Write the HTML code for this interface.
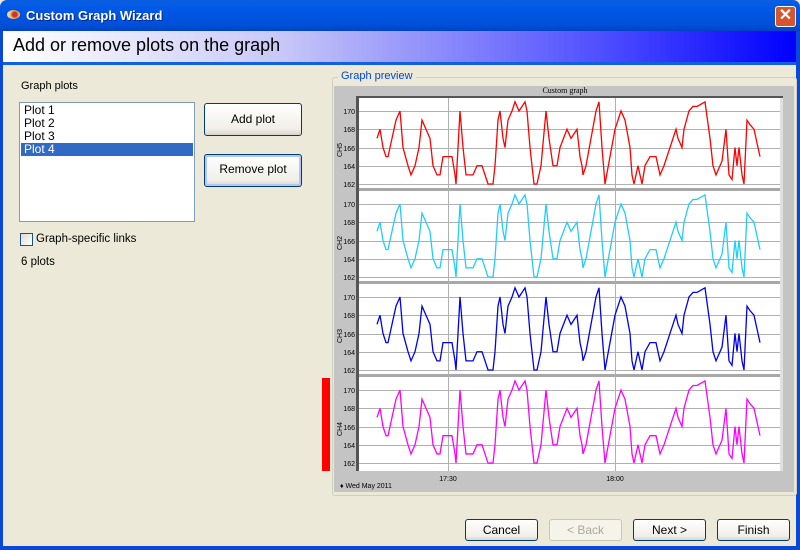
<!DOCTYPE html>
<html><head><meta charset="utf-8"><style>
*{margin:0;padding:0;box-sizing:border-box}
body{width:800px;height:550px;overflow:hidden;background:#ECE9D8;font-family:"Liberation Sans",sans-serif;font-size:11px;color:#000;position:relative}
.abs{position:absolute}
.btn{position:absolute;border:1px solid #003C74;border-radius:3px;background:linear-gradient(#fff,#F0EFE8 80%,#D8D6CC);text-align:center;font-size:12px;}
</style></head><body>
<div class="abs" style="left:0;top:0;width:800px;height:31px;background:linear-gradient(#0A5FE0,#0058E6 30%,#0050D8 80%,#0042C4);border-radius:7px 7px 0 0"></div>
<div class="abs" style="left:7px;top:10px;width:13px;height:9px;border-radius:50%;background:radial-gradient(circle at 60% 50%,#c33 25%,#f6b040 45%,#ddd 70%)"></div>
<div class="abs" style="left:26px;top:8px;color:#fff;font-weight:bold;font-size:13px;text-shadow:1px 1px #0a2a8a">Custom Graph Wizard</div>
<div class="abs" style="left:775px;top:6px;width:21px;height:21px;border:1px solid #fff;border-radius:3px;background:#D7542F;color:#fff;font-weight:bold;font-size:16px;line-height:18px;text-align:center">✕</div>
<div class="abs" style="left:0;top:31px;width:3px;height:519px;background:#0A48D8"></div>
<div class="abs" style="left:796px;top:31px;width:4px;height:519px;background:#0A48D8"></div>
<div class="abs" style="left:0;top:546px;width:800px;height:4px;background:#0A48D8"></div>
<div class="abs" style="left:3px;top:31px;width:793px;height:31px;background:linear-gradient(90deg,#fff 0%,#C8C8F8 35%,#5050FF 75%,#0000FF 100%)"></div>
<div class="abs" style="left:3px;top:62px;width:793px;height:3px;background:#1060E0"></div>
<div class="abs" style="left:13px;top:35px;font-size:18px">Add or remove plots on the graph</div>
<div class="abs" style="left:21px;top:80px;font-size:11px">Graph plots</div>
<div class="abs" style="left:19px;top:102px;width:176px;height:120px;background:#fff;border:1px solid #7F9DB9;font-size:12px;line-height:13px;padding:1px 1px">
<div style="padding-left:3px">Plot 1</div><div style="padding-left:3px">Plot 2</div><div style="padding-left:3px">Plot 3</div><div style="padding-left:3px;background:#316AC5;color:#fff">Plot 4</div></div>
<div class="btn" style="left:204px;top:103px;width:98px;height:33px;line-height:31px">Add plot</div>
<div class="btn" style="left:204px;top:154px;width:98px;height:33px;line-height:29px;box-shadow:inset 0 0 0 2px #B2C8F0">Remove plot</div>
<div class="abs" style="left:20px;top:233px;width:13px;height:13px;border:1px solid #1C5180;background:linear-gradient(135deg,#DCDBD5,#fff)"></div>
<div class="abs" style="left:36px;top:233px;font-size:11.5px">Graph-specific links</div>
<div class="abs" style="left:21px;top:256px;font-size:11.5px">6 plots</div>
<div class="abs" style="left:332px;top:77px;width:465px;height:419px;border:1px solid #D0D0BF;border-radius:3px"></div>
<div class="abs" style="left:338px;top:70px;padding:0 3px;background:#ECE9D8;color:#0046D5;font-size:11px">Graph preview</div>
<div class="abs" style="left:322px;top:378px;width:8px;height:93px;background:#f00"></div>
<svg class="abs" style="left:0;top:0" width="800" height="550">
<rect x="334" y="86" width="460" height="406" fill="#C4C4C4"/>
<rect x="358" y="98" width="422" height="373" fill="#fff"/>
<rect x="780" y="98" width="3" height="373" fill="#E0E0E0"/>
<rect x="356" y="96" width="427" height="2" fill="#555"/>
<rect x="356" y="96" width="3" height="375" fill="#555"/>
<text x="565" y="93" font-family="Liberation Serif" font-size="8" text-anchor="middle">Custom graph</text>
<g id="grid">
<g stroke="#B0B0B0" stroke-width="1">
<line x1="359" x2="780" y1="111.5" y2="111.5"/><line x1="359" x2="780" y1="129.5" y2="129.5"/><line x1="359" x2="780" y1="148.5" y2="148.5"/><line x1="359" x2="780" y1="166.5" y2="166.5"/><line x1="359" x2="780" y1="184.5" y2="184.5"/>
</g>
<g font-size="7" text-anchor="end" fill="#000"><text x="355" y="114">170</text><text x="355" y="132">168</text><text x="355" y="151">166</text><text x="355" y="169">164</text><text x="355" y="187">162</text></g>
</g>
<use href="#grid" y="93"/><use href="#grid" y="186"/><use href="#grid" y="279"/>
<g fill="#A8A8A8"><rect x="359" y="188" width="421" height="3"/><rect x="359" y="281" width="421" height="3"/><rect x="359" y="374" width="421" height="3"/></g>
<g stroke="#B0B0B0"><line x1="448.5" x2="448.5" y1="98" y2="471"/><line x1="615.5" x2="615.5" y1="98" y2="471"/></g>
<g font-size="7" fill="#000"><text transform="translate(342,150) rotate(-90)" text-anchor="middle">CH5</text><text transform="translate(342,243) rotate(-90)" text-anchor="middle">CH2</text><text transform="translate(342,336) rotate(-90)" text-anchor="middle">CH3</text><text transform="translate(342,429) rotate(-90)" text-anchor="middle">CH4</text>
<text x="448" y="481" text-anchor="middle">17:30</text><text x="615" y="481" text-anchor="middle">18:00</text><text x="340" y="488">♦ Wed May 2011</text></g>
<defs><polyline id="d" fill="none" stroke-width="1.3" vector-effect="non-scaling-stroke" points="377,167 380,168 383,166 386,165 388,165 392,167 396,169 400,170 403,166 408,164 411,163 415,164 419,166 422,169 426,168 430,167 433,164 437,163 440,163 443,165 448,165 452,165 455,163 456,162 457,164 460,170 463,166 466,163 470,163 473,163 477,164 482,164 485,163 488,162 493,162 495,164 498,169 500,170 503,167 505,166 508,169 512,170 515,171 519,170 525,171 527,170 530,166 534,162 537,162 541,164 546,170 549,167 553,164 557,164 560,166 567,168 571,167 577,168 580,165 582,164 583,163 586,164 596,170 599,171 602,166 605,162 610,165 615,168 621,170 625,169 630,166 632,163 634,162 638,164 642,162 645,164 650,165 656,165 660,163 664,164 670,166 676,168 678,167 682,166 684,168 689,170 693,170.5 697,170.5 705,171 710,167 713,164 716,163 720,164 722,164.5 726,168 729,163 732,162.5 735,166 737,164 739,166 742,163 744,162 747,169 750,168.5 754,168 758,166 760,165"/></defs>
<g transform="translate(0,1662.25) scale(1,-9.125)">
<use href="#d" stroke="#FF0000"/>
<use href="#d" stroke="#22CCFF" transform="translate(0,-10.19)"/>
<use href="#d" stroke="#0000EE" transform="translate(0,-20.38)"/>
<use href="#d" stroke="#FF00FF" transform="translate(0,-30.58)"/>
</g>
</svg>
<div class="btn" style="left:465px;top:519px;width:73px;height:22px;line-height:20px">Cancel</div>
<div class="btn" style="left:549px;top:519px;width:73px;height:22px;line-height:20px;border-color:#C9C7BA;color:#ACA899;background:#F5F4EA">&lt; Back</div>
<div class="btn" style="left:633px;top:519px;width:73px;height:22px;line-height:20px">Next &gt;</div>
<div class="btn" style="left:717px;top:519px;width:73px;height:22px;line-height:20px">Finish</div>
</body></html>
